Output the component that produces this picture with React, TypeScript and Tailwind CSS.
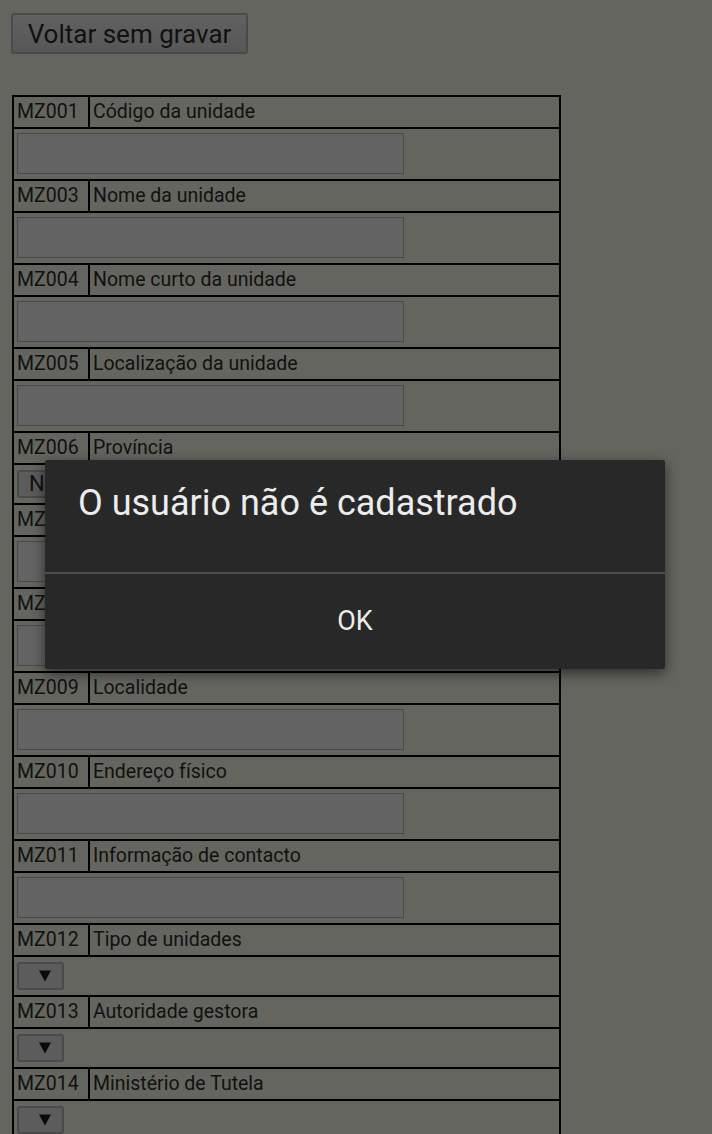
import React from "react";

type Field = {
  code: string;
  label: string;
  kind: "input" | "select";
  value?: string;
};

const fields: Field[] = [
  { code: "MZ001", label: "Código da unidade", kind: "input" },
  { code: "MZ003", label: "Nome da unidade", kind: "input" },
  { code: "MZ004", label: "Nome curto da unidade", kind: "input" },
  { code: "MZ005", label: "Localização da unidade", kind: "input" },
  { code: "MZ006", label: "Província", kind: "select", value: "Niassa" },
  { code: "MZ007", label: "Distrito", kind: "input" },
  { code: "MZ008", label: "Posto administrativo", kind: "input" },
  { code: "MZ009", label: "Localidade", kind: "input" },
  { code: "MZ010", label: "Endereço físico", kind: "input" },
  { code: "MZ011", label: "Informação de contacto", kind: "input" },
  { code: "MZ012", label: "Tipo de unidades", kind: "select" },
  { code: "MZ013", label: "Autoridade gestora", kind: "select" },
  { code: "MZ014", label: "Ministério de Tutela", kind: "select" },
];

function Arrow() {
  return (
    <svg width="12" height="12" viewBox="0 0 12 12" className="shrink-0">
      <path d="M0 0.5 H12 L6 11.5 Z" fill="#0a0a0a" />
    </svg>
  );
}

function FieldRows({ field }: { field: Field }) {
  return (
    <>
      <div className="flex h-[32px] border-b-2 border-black">
        <div className="w-[76px] border-r-2 border-black pl-[3px] leading-[29px]">
          {field.code}
        </div>
        <div className="pl-[3px] leading-[29px]">{field.label}</div>
      </div>
      {field.kind === "input" ? (
        <div className="h-[52px] border-b-2 border-black pl-[3px] pt-[4px]">
          <div className="h-[41px] w-[387px] border border-[#4a4a4a] bg-[#636363]" />
        </div>
      ) : (
        <div className="h-[40px] border-b-2 border-black pl-[3px] pt-[5px]">
          <div className="flex h-[28px] min-w-[47px] w-fit items-center gap-2 rounded-[3px] border-2 border-[#4a4a4a] bg-[#5c5c5c] pl-[20px] pr-[11px] text-[22px] leading-none">
            {field.value && <span className="-ml-[10px]">{field.value}</span>}
            <Arrow />
          </div>
        </div>
      )}
    </>
  );
}

export default function App() {
  return (
    <div
      className="relative h-[1134px] overflow-hidden bg-[#64655e] text-[#111]"
      style={{ fontFamily: "Roboto, 'Noto Sans', sans-serif" }}
    >
      <div className="pl-[11px] pt-[13px]">
        <button className="h-[41px] w-[237px] rounded-[3px] border-2 border-[#4a4a4a] bg-gradient-to-b from-[#616161] to-[#575757] text-[26px] leading-none text-[#111]">
          Voltar sem gravar
        </button>
      </div>

      <div className="ml-[12px] mt-[41px] w-[549px] border-2 border-b-0 border-black text-[19.5px]">
        {fields.map((f) => (
          <FieldRows key={f.code} field={f} />
        ))}
      </div>

      <div className="absolute left-[45px] top-[460px] w-[620px] rounded-[2px] bg-[#282828] shadow-[0_4px_14px_rgba(0,0,0,0.55)]">
        <div className="h-[114px] border-b-2 border-[#4e4e4e] pl-[33px] pt-[23px] text-[36px] leading-[40px] text-[#ececec]">
          O usuário não é cadastrado
        </div>
        <div className="flex h-[95px] items-center justify-center text-[27px] text-[#ececec]">
          OK
        </div>
      </div>
    </div>
  );
}
